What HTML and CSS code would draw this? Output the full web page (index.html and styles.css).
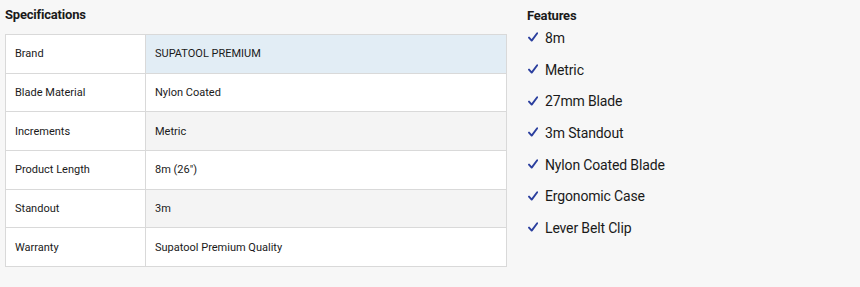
FILE: index.html
```html
<!DOCTYPE html>
<html>
<head>
<meta charset="utf-8">
<link rel="stylesheet" href="styles.css">
</head>
<body>
<div class="page">
  <section class="specs">
    <h2 class="title">Specifications</h2>
    <table class="spec-table">
      <tr class="row-hl"><td class="label">Brand</td><td class="value">SUPATOOL PREMIUM</td></tr>
      <tr><td class="label">Blade Material</td><td class="value">Nylon Coated</td></tr>
      <tr class="row-alt"><td class="label">Increments</td><td class="value">Metric</td></tr>
      <tr><td class="label">Product Length</td><td class="value">8m (26")</td></tr>
      <tr class="row-alt"><td class="label">Standout</td><td class="value">3m</td></tr>
      <tr><td class="label">Warranty</td><td class="value">Supatool Premium Quality</td></tr>
    </table>
  </section>
  <section class="features">
    <h2 class="title title-f">Features</h2>
    <ul class="feature-list">
      <li><svg class="tick" viewBox="0 0 10 10"><polyline points="1,5.6 3.7,8.6 9.2,1.2"/></svg>8m</li>
      <li><svg class="tick" viewBox="0 0 10 10"><polyline points="1,5.6 3.7,8.6 9.2,1.2"/></svg>Metric</li>
      <li><svg class="tick" viewBox="0 0 10 10"><polyline points="1,5.6 3.7,8.6 9.2,1.2"/></svg>27mm Blade</li>
      <li><svg class="tick" viewBox="0 0 10 10"><polyline points="1,5.6 3.7,8.6 9.2,1.2"/></svg>3m Standout</li>
      <li><svg class="tick" viewBox="0 0 10 10"><polyline points="1,5.6 3.7,8.6 9.2,1.2"/></svg>Nylon Coated Blade</li>
      <li><svg class="tick" viewBox="0 0 10 10"><polyline points="1,5.6 3.7,8.6 9.2,1.2"/></svg>Ergonomic Case</li>
      <li><svg class="tick" viewBox="0 0 10 10"><polyline points="1,5.6 3.7,8.6 9.2,1.2"/></svg>Lever Belt Clip</li>
    </ul>
  </section>
</div>
</body>
</html>
```
FILE: styles.css
```css
html, body {
  margin: 0;
  padding: 0;
  background: #f7f7f7;
  font-family: Roboto, "Liberation Sans", sans-serif;
  color: #1a1a1a;
}
.page {
  display: flex;
  gap: 20px;
  padding: 0 0 0 5px;
}
.specs {
  width: 502px;
}
.title {
  margin: 0;
  font-size: 13px;
  font-weight: bold;
  line-height: 16px;
  padding-top: 7px;
  height: 34px;
  box-sizing: border-box;
  letter-spacing: -0.2px;
}
.spec-table {
  width: 100%;
  border-collapse: collapse;
  font-size: 11px;
  background: #fff;
}
.spec-table td {
  border: 1px solid #d9d9d9;
  height: 38.67px;
  padding: 0 9px;
  box-sizing: border-box;
}
.spec-table .label {
  width: 140px;
  background: #fff;
}
.row-hl .value { background: #e2edf5; }
.row-alt .value { background: #f4f4f4; }
.features {
  flex: 1;
}
.title-f {
  padding-top: 9px;
  height: 23px;
  line-height: 14px;
}
.feature-list {
  list-style: none;
  margin: 0;
  padding: 0;
  font-size: 14px;
  letter-spacing: -0.15px;
}
.feature-list li {
  height: 31.67px;
  line-height: 31.67px;
  display: flex;
  align-items: center;
}
.tick {
  width: 10px;
  height: 10px;
  margin: -3px 7px 0 1px;
  fill: none;
  stroke: #2b3f9e;
  stroke-width: 1.9;
  stroke-linecap: round;
  stroke-linejoin: round;
}
```
